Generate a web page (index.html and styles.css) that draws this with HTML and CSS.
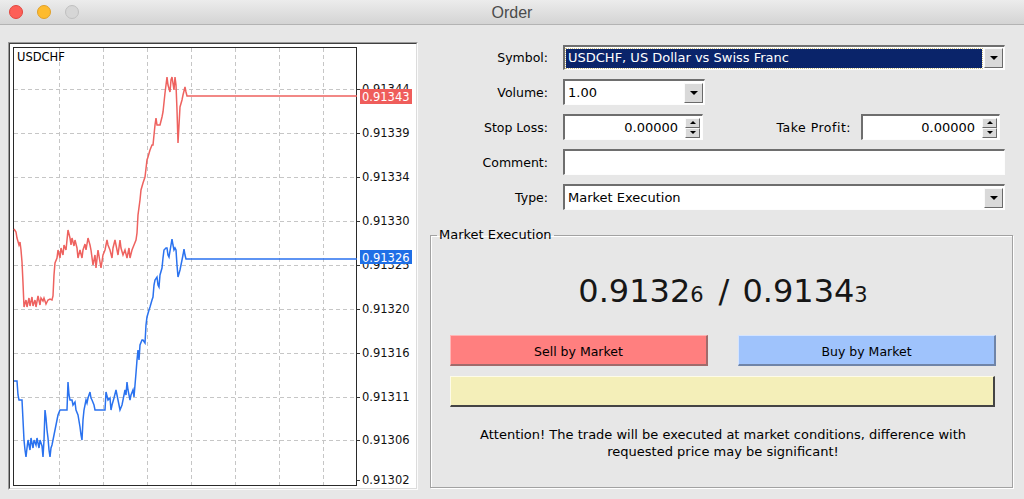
FILE: index.html
```html
<!DOCTYPE html>
<html>
<head>
<meta charset="utf-8">
<title>Order</title>
<link rel="stylesheet" href="styles.css">
</head>
<body>
<div class="titlebar">
  <div class="lights">
    <span class="light red"></span>
    <span class="light yellow"></span>
    <span class="light gray"></span>
  </div>
  <div class="title">Order</div>
  <div></div>
</div>
<div class="main">
  <div class="chart-frame">
    <div class="chart">
      <svg class="plot" width="406" height="444" viewBox="10 44 406 444" xmlns="http://www.w3.org/2000/svg">
        <path class="grid" d="M14 89.5H356M14 133.5H356M14 177.5H356M14 221.5H356M14 265.5H356M14 309.5H356M14 353.5H356M14 397.5H356M14 440.5H356M59.5 48V485M103.5 48V485M147.5 48V485M191.5 48V485M235.5 48V485M279.5 48V485M323.5 48V485"/>
        <rect class="frame" x="13.5" y="47.5" width="343" height="438"/>
        <path class="ticks" d="M357 89.5h3M357 133.5h3M357 177.5h3M357 221.5h3M357 265.5h3M357 309.5h3M357 353.5h3M357 397.5h3M357 440.5h3M357 480.5h3"/>
        <text class="sym" x="17" y="61">USDCHF</text>
        <g class="axis">
          <text x="362" y="93">0.91344</text>
          <text x="362" y="137">0.91339</text>
          <text x="362" y="181">0.91334</text>
          <text x="362" y="225">0.91330</text>
          <text x="362" y="269">0.91325</text>
          <text x="362" y="313">0.91320</text>
          <text x="362" y="357">0.91316</text>
          <text x="362" y="401">0.91311</text>
          <text x="362" y="444">0.91306</text>
          <text x="362" y="484">0.91302</text>
        </g>
        <polyline class="ask" points="14,229 16,232 17,238 19,245 20,242 21,250 22,262 23,283 24,307 26,300 27,307 29,298 30,306 32,297 33,306 35,300 36,307 38,296 40,305 41,298 43,301 44,298 46,304 48,300 50,299 52,300 53,296 54,275 55,263 57,258 58,250 60,258 61,248 63,255 64,245 66,250 67,240 68,230 70,238 71,245 72,238 74,246 75,240 77,248 78,258 80,250 82,258 83,250 85,244 86,250 88,238 90,245 91,250 93,265 95,255 96,268 98,250 100,262 101,268 103,255 105,250 107,240 108,245 110,250 112,258 113,248 115,240 117,250 118,255 120,240 121,248 123,255 125,250 127,258 129,248 130,258 132,250 134,245 136,240 137,233 138,215 140,200 141,190 143,183 145,177 147,160 148,157 150,150 152,145 153,145 155,125 156,118 157,125 159,125 160,125 162,117 163,112 165,93 167,77 168,85 170,92 171,80 172,77 174,90 175,77 176,85 177,110 178,143 179,125 180,107 182,100 183,95 185,87 186,92 187,96 357,96"/>
        <polyline class="bid" points="14,381 17,381 18,395 19,400 22,400 23,420 24,440 25,450 26,457 27,448 28,440 30,450 31,438 33,448 34,440 36,445 37,438 39,448 40,440 42,446 43,457 44,440 45,410 46,418 47,430 48,438 49,450 50,457 51,448 52,445 53,440 55,430 57,420 58,415 60,410 63,410 65,410 67,410 68,382 69,395 70,400 72,400 73,405 75,402 76,410 78,415 80,427 81,435 82,440 83,420 84,410 86,400 87,403 88,398 90,392 91,398 92,400 94,405 95,410 100,410 105,410 106,392 108,400 110,398 111,410 112,405 114,398 116,390 117,395 119,405 120,410 122,405 124,395 125,390 126,395 127,382 128,390 130,400 131,395 133,390 134,397 136,373 137,360 138,350 139,360 140,345 142,340 143,340 145,343 146,325 147,317 149,310 150,307 152,300 153,297 154,285 155,280 157,277 158,285 159,287 160,275 162,268 163,258 164,250 166,248 167,248 168,255 169,257 171,245 172,239 173,245 174,250 175,248 176,250 177,265 178,277 180,270 181,265 183,255 184,249 185,255 186,259 357,259"/>
        <rect class="ask-box" x="360" y="89" width="52" height="15"/>
        <text class="box-text" x="362" y="101">0.91343</text>
        <rect class="bid-box" x="360" y="250" width="52" height="14"/>
        <text class="box-text" x="362" y="261.5">0.91326</text>
      </svg>
    </div>
  </div>

  <div class="panel">
    <div class="form">
      <div class="label">Symbol:</div>
      <div class="field symbol">
        <div class="selected">USDCHF, US Dollar vs Swiss Franc</div>
        <div class="drop"><span class="tri-down"></span></div>
      </div>

      <div class="label">Volume:</div>
      <div class="field volume">
        <div class="text">1.00</div>
        <div class="drop"><span class="tri-down"></span></div>
      </div>

      <div class="label">Stop Loss:</div>
      <div class="pair">
        <div class="field num sl">
          <div class="text right">0.00000</div>
          <div class="spin"><span class="half"><span class="tri-up-s"></span></span><span class="half"><span class="tri-down-s"></span></span></div>
        </div>
        <div class="label tp-label">Take Profit:</div>
        <div class="field num tp">
          <div class="text right">0.00000</div>
          <div class="spin"><span class="half"><span class="tri-up-s"></span></span><span class="half"><span class="tri-down-s"></span></span></div>
        </div>
      </div>

      <div class="label">Comment:</div>
      <div class="field comment"></div>

      <div class="label">Type:</div>
      <div class="field type">
        <div class="text">Market Execution</div>
        <div class="drop"><span class="tri-down"></span></div>
      </div>
    </div>

    <fieldset class="group">
      <legend>Market Execution</legend>
      <div class="exec">
        <div class="price"><span>0.9132</span><span class="pip">6</span><span class="sep">/</span><span>0.9134</span><span class="pip">3</span></div>
        <div class="buttons">
          <div class="btn sell">Sell by Market</div>
          <div class="btn buy">Buy by Market</div>
        </div>
        <div class="bar"></div>
        <p class="note">Attention! The trade will be executed at market conditions, difference with<br>requested price may be significant!</p>
      </div>
    </fieldset>
  </div>
</div>
</body>
</html>
```
FILE: styles.css
```css
* { box-sizing: border-box; }

body {
  margin: 0;
  width: 1024px;
  height: 499px;
  overflow: hidden;
  background: #e7e7e7;
  font-family: "DejaVu Sans", "Liberation Sans", sans-serif;
  font-size: 12px;
  color: #000;
}

.titlebar {
  height: 25px;
  border-bottom: 1px solid #b3b3b3;
  background: linear-gradient(#ececec, #d4d4d4);
  display: grid;
  grid-template-columns: 1fr auto 1fr;
  align-items: center;
}

.lights {
  display: flex;
  gap: 14px;
  padding-left: 9px;
}

.light {
  width: 14px;
  height: 14px;
  border-radius: 50%;
  border: 1px solid;
}
.light.red { background: #fd5f57; border-color: #e2463f; }
.light.yellow { background: #febb2e; border-color: #e0a02a; }
.light.gray { background: #d6d6d6; border-color: #c0c0c0; }

.title {
  font-family: "Liberation Sans", "Noto Sans", sans-serif;
  font-size: 16px;
  color: #4b4b4b;
  padding-top: 1px;
}

.main {
  display: flex;
  gap: 12px;
  padding: 17px 0 0 8px;
}

.chart-frame {
  width: 410px;
  height: 448px;
  border: 1px solid;
  border-color: #9b9b9b #fbfbfb #fbfbfb #9b9b9b;
}

.chart {
  width: 408px;
  height: 446px;
  border: 1px solid;
  border-color: #404040 #dcdcdc #dcdcdc #404040;
  background: #fff;
}

.plot { display: block; }

.grid {
  fill: none;
  stroke: #c6c6c6;
  stroke-width: 1;
  stroke-dasharray: 4 3;
}

.frame {
  fill: none;
  stroke: #2a2a2a;
  stroke-width: 1;
}

.ticks { stroke: #333; stroke-width: 1; }

.sym, .axis text, .box-text {
  font-family: "DejaVu Sans", sans-serif;
  font-size: 11.5px;
}
.axis text { fill: #111; }
.box-text { fill: #fff; }

.ask { fill: none; stroke: #ee625f; stroke-width: 1.5; }
.bid { fill: none; stroke: #2a72ef; stroke-width: 1.5; }
.ask-box { fill: #ef5d5b; }
.bid-box { fill: #1f6fe6; }

.panel {
  width: 583px;
  padding-top: 3px;
  display: flex;
  flex-direction: column;
}

.form {
  display: grid;
  grid-template-columns: 118px 1fr;
  column-gap: 15px;
  row-gap: 9px;
  align-items: center;
  padding-right: 8px;
}

.label { text-align: right; white-space: nowrap; font-size: 12.5px; }

.field {
  height: 26px;
  background: #fff;
  border-style: solid;
  border-width: 2px 1px 1px 2px;
  border-color: #6e6e6e #fdfdfd #fdfdfd #6e6e6e;
  display: flex;
  align-items: center;
  font-size: 13px;
}

.field .text {
  flex: 1;
  padding-left: 3px;
  white-space: nowrap;
}
.field .text.right { text-align: right; padding-left: 0; }

.symbol { height: 25px; }

.selected {
  flex: 1;
  height: 19px;
  margin: 0 2px 0 1px;
  padding-left: 2px;
  line-height: 18px;
  background: #0a246a;
  color: #fff;
  outline: 1px dotted #cbbd7f;
  white-space: nowrap;
}

.drop {
  width: 19px;
  height: 20px;
  margin-right: 1px;
  background: #d9d9d9;
  border: 1px solid;
  border-color: #fafafa #6a6a6a #6a6a6a #fafafa;
  display: flex;
  align-items: center;
  justify-content: center;
}

.tri-down {
  width: 0;
  height: 0;
  border-left: 4px solid transparent;
  border-right: 4px solid transparent;
  border-top: 4px solid #000;
}

.volume { width: 142px; }

.pair {
  display: flex;
  align-items: center;
  padding-right: 5px;
}

.sl { width: 140px; }
.tp { width: 139px; }
.tp-label { margin-left: auto; margin-right: 10px; letter-spacing: 0.5px; }

.spin {
  width: 15px;
  height: 20px;
  margin: 0 2px 0 7px;
  display: flex;
  flex-direction: column;
}

.half {
  flex: 1;
  background: #d9d9d9;
  border: 1px solid;
  border-color: #fafafa #6a6a6a #6a6a6a #fafafa;
  display: flex;
  align-items: center;
  justify-content: center;
}

.tri-up-s {
  width: 0;
  height: 0;
  border-left: 3px solid transparent;
  border-right: 3px solid transparent;
  border-bottom: 3px solid #000;
}
.tri-down-s {
  width: 0;
  height: 0;
  border-left: 3px solid transparent;
  border-right: 3px solid transparent;
  border-top: 3px solid #000;
}

.group {
  margin: 17px 0 0 0;
  padding: 0;
  min-width: 0;
  border: 1px solid #a2a2a2;
  box-shadow: inset 1px 1px 0 #fff, 1px 1px 0 #fff;
}

.group legend {
  margin-left: 6px;
  padding: 0 2px;
  font-size: 13px;
  line-height: 16px;
}

.exec {
  padding: 28px 16px 27px 19px;
}

.price {
  height: 40px;
  line-height: 40px;
  text-align: center;
  font-size: 32px;
  color: #161616;
  white-space: nowrap;
}
.price .pip { font-size: 21px; }
.price .sep { margin: 0 13px 0 15px; }

.buttons {
  margin-top: 24px;
  display: grid;
  grid-template-columns: 1fr 1fr;
  column-gap: 30px;
}

.btn {
  height: 31px;
  display: flex;
  align-items: center;
  justify-content: center;
  border-style: solid;
  border-width: 1px 2px 2px 1px;
  white-space: nowrap;
  font-size: 12.5px;
  padding-top: 2px;
}
.btn.sell {
  background: #ff7f7f;
  border-color: #ffb5b5 #a06b6b #a06b6b #ffb5b5;
}
.btn.buy {
  background: #9fc3fc;
  border-color: #d4e4ff #6f84a8 #6f84a8 #d4e4ff;
}

.bar {
  margin: 10px 1px 0 0;
  height: 31px;
  background: #f4efb9;
  border-style: solid;
  border-width: 1px 2px 2px 1px;
  border-color: #fdfbe8 #444 #444 #fdfbe8;
}

.note {
  margin: 19px 0 0 0;
  line-height: 17px;
  text-align: center;
  font-size: 13px;
}
```
